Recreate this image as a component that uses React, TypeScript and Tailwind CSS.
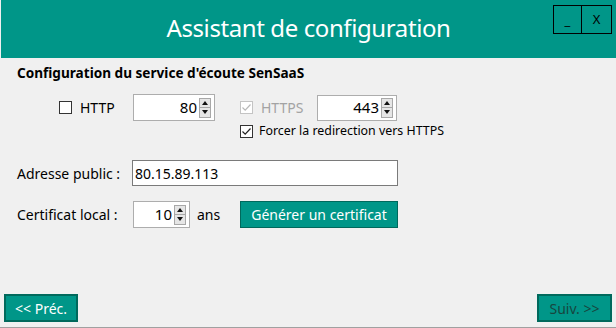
import React from "react";

const font = { fontFamily: '"Noto Sans", "Open Sans", sans-serif' };

function Check({ checked, disabled }: { checked?: boolean; disabled?: boolean }) {
  const border = disabled ? "#c4c4c4" : "#333333";
  const mark = disabled ? "#b8b8b8" : "#222222";
  return (
    <svg width="13" height="13" viewBox="0 0 13 13" className="shrink-0">
      <rect x="0.5" y="0.5" width="12" height="12" fill="#ffffff" stroke={border} />
      {checked && (
        <path d="M2.5 6.5 L5.2 9.2 L10.5 3.5" fill="none" stroke={mark} strokeWidth="1.2" />
      )}
    </svg>
  );
}

function Spin({ value, w, h }: { value: string; w: string; h: string }) {
  return (
    <div className={`${w} ${h} bg-white border border-[#adadad] flex items-center justify-end pr-[3px] text-[15px] text-black`}>
      <span className="mr-[2px]">{value}</span>
      <div className="flex flex-col w-[12px] h-[20px]">
        <div className="flex-1 bg-[#e6e6e6] border border-[#a8a8a8] flex items-center justify-center">
          <svg width="6" height="4" viewBox="0 0 6 4"><path d="M0 4 L3 0 L6 4Z" fill="#111" /></svg>
        </div>
        <div className="flex-1 bg-[#e6e6e6] border border-t-0 border-[#a8a8a8] flex items-center justify-center">
          <svg width="6" height="4" viewBox="0 0 6 4"><path d="M0 0 L6 0 L3 4Z" fill="#111" /></svg>
        </div>
      </div>
    </div>
  );
}

export default function App() {
  return (
    <div className="w-[616px] h-[328px] bg-[#f0f0f0] flex flex-col overflow-hidden" style={font}>
      <div className="h-[58px] bg-[#009688] ml-px relative flex items-center justify-center shrink-0">
        <span className="text-white text-[24px] tracking-[-0.4px] leading-none pb-[2px]">Assistant de configuration</span>
        <div className="absolute top-[5px] right-[4px] flex">
          <div className="w-[29px] h-[29px] border border-black flex items-end justify-center text-[13px] text-black leading-none pb-[6px]">_</div>
          <div className="w-[30px] h-[29px] border border-l-0 border-black flex items-center justify-center text-[13px] text-black">X</div>
        </div>
      </div>

      <div className="flex flex-col flex-1 px-[17px]">
        <div className="mt-[5px] h-[20px] leading-[20px] text-[13.6px] font-bold text-black">
          Configuration du service d'écoute SenSaaS
        </div>

        <div className="mt-[11px] h-[27px] flex items-center">
          <div className="ml-[42px] w-[74px] flex items-center gap-[8px] text-[14px] text-black">
            <Check />
            <span>HTTP</span>
          </div>
          <Spin value="80" w="w-[82px]" h="h-[27px]" />
          <div className="ml-[25px] w-[77px] flex items-center gap-[8px] text-[14px] text-[#a3a3a3]">
            <Check checked disabled />
            <span>HTTPS</span>
          </div>
          <Spin value="443" w="w-[80px]" h="h-[26px]" />
        </div>

        <div className="mt-[3px] h-[14px] ml-[223px] flex items-center gap-[6px] text-[12.4px] text-black">
          <Check checked />
          <span>Forcer la redirection vers HTTPS</span>
        </div>

        <div className="mt-[22px] h-[26px] flex items-center">
          <span className="w-[115px] text-[14px] text-black">Adresse public :</span>
          <div className="w-[266px] h-[26px] bg-white border border-[#7a7a7a] flex items-center pl-[2px] text-[14px] text-black">
            80.15.89.113
          </div>
        </div>

        <div className="mt-[15px] h-[27px] flex items-center">
          <span className="w-[116px] text-[14px] text-black">Certificat local :</span>
          <Spin value="10" w="w-[57px]" h="h-[27px]" />
          <span className="ml-[7px] w-[43px] text-[14px] text-black">ans</span>
          <div className="w-[158px] h-[27px] bg-[#009688] border border-[#00695c] flex items-center justify-center text-[14px] text-white">
            Générer un certificat
          </div>
        </div>

        <div className="flex-1" />
      </div>

      <div className="h-[28px] mb-[5px] px-[4px] flex justify-between shrink-0">
        <div className="w-[74px] h-[28px] bg-[#009688] border-2 border-[#00695c] flex items-center justify-center text-[14px] text-white">
          &lt;&lt; Préc.
        </div>
        <div className="w-[75px] h-[28px] bg-[#009688] border-2 border-[#00695c] flex items-center justify-center text-[14px] text-[#17463f]">
          Suiv. &gt;&gt;
        </div>
      </div>
      <div className="h-px bg-[#a0a0a0] shrink-0" />
    </div>
  );
}
